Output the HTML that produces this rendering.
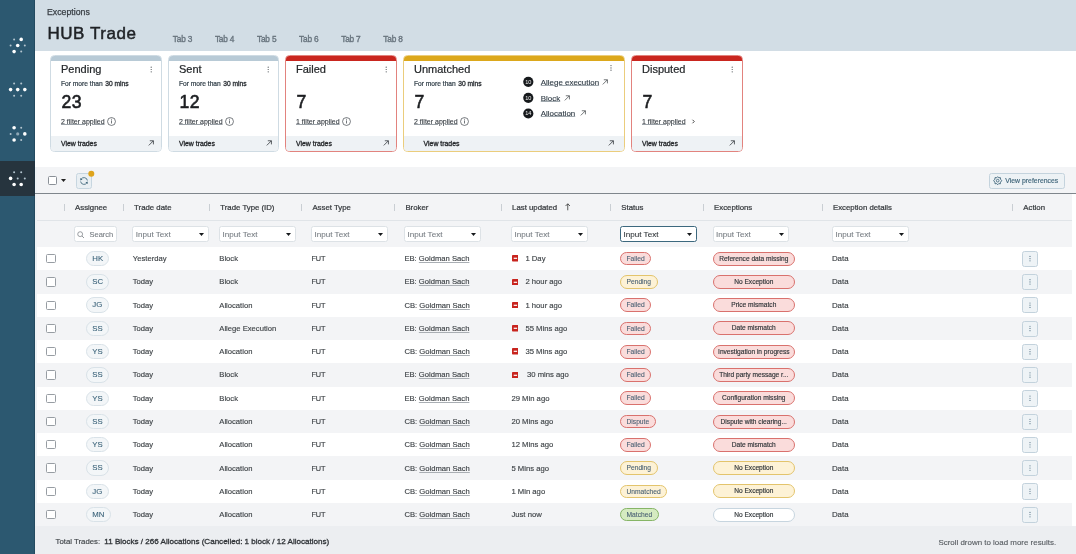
<!DOCTYPE html><html><head><meta charset="utf-8"><style>
*{box-sizing:border-box;margin:0;padding:0}
html,body{width:1076px;height:554px;overflow:hidden;background:#fff;font-family:"Liberation Sans",sans-serif}
#root{position:absolute;left:0;top:0;width:1076px;height:554px;will-change:transform}
.t{position:absolute;white-space:nowrap;line-height:1}
.r{position:absolute}
</style></head><body><div id="root"><div class="r" style="left:0.00px;top:0.00px;width:35.00px;height:554.00px;background:#2c5870;"></div>
<div class="r" style="left:0.00px;top:161.00px;width:35.00px;height:35.00px;background:#26343e;"></div>
<div class="r" style="left:34.00px;top:0.00px;width:1.00px;height:554.00px;background:rgba(20,50,66,0.35);"></div>
<svg class="r" style="left:12px;top:37px" width="5" height="5"><circle cx="2.10" cy="2.40" r="1.00" fill="#b4c5cf"/></svg>
<svg class="r" style="left:18px;top:36px" width="6" height="6"><circle cx="3.20" cy="3.40" r="1.80" fill="#fff"/></svg>
<svg class="r" style="left:8px;top:43px" width="5" height="5"><circle cx="2.60" cy="2.50" r="1.00" fill="#b4c5cf"/></svg>
<svg class="r" style="left:14px;top:42px" width="6" height="6"><circle cx="3.70" cy="3.50" r="1.80" fill="#fff"/></svg>
<svg class="r" style="left:22px;top:43px" width="5" height="5"><circle cx="2.80" cy="2.50" r="1.00" fill="#b4c5cf"/></svg>
<svg class="r" style="left:11px;top:48px" width="6" height="6"><circle cx="3.10" cy="3.60" r="1.80" fill="#fff"/></svg>
<svg class="r" style="left:19px;top:49px" width="5" height="5"><circle cx="2.20" cy="2.60" r="1.00" fill="#b4c5cf"/></svg>
<svg class="r" style="left:12px;top:81px" width="5" height="5"><circle cx="2.10" cy="2.50" r="1.00" fill="#b4c5cf"/></svg>
<svg class="r" style="left:19px;top:81px" width="5" height="5"><circle cx="2.20" cy="2.50" r="1.00" fill="#b4c5cf"/></svg>
<svg class="r" style="left:7px;top:86px" width="6" height="6"><circle cx="3.60" cy="3.60" r="1.80" fill="#fff"/></svg>
<svg class="r" style="left:14px;top:86px" width="6" height="6"><circle cx="3.70" cy="3.60" r="1.80" fill="#fff"/></svg>
<svg class="r" style="left:22px;top:86px" width="6" height="6"><circle cx="2.80" cy="3.60" r="1.80" fill="#fff"/></svg>
<svg class="r" style="left:12px;top:93px" width="5" height="5"><circle cx="2.10" cy="2.70" r="1.00" fill="#b4c5cf"/></svg>
<svg class="r" style="left:19px;top:93px" width="5" height="5"><circle cx="2.20" cy="2.70" r="1.00" fill="#b4c5cf"/></svg>
<svg class="r" style="left:11px;top:125px" width="6" height="6"><circle cx="3.10" cy="2.80" r="1.80" fill="#fff"/></svg>
<svg class="r" style="left:19px;top:125px" width="5" height="5"><circle cx="2.20" cy="2.80" r="1.00" fill="#b4c5cf"/></svg>
<svg class="r" style="left:8px;top:131px" width="5" height="5"><circle cx="2.60" cy="2.90" r="1.00" fill="#b4c5cf"/></svg>
<svg class="r" style="left:15px;top:131px" width="6" height="6"><circle cx="2.70" cy="2.90" r="1.60" fill="#8fa8b6"/></svg>
<svg class="r" style="left:22px;top:131px" width="6" height="6"><circle cx="2.80" cy="2.90" r="1.80" fill="#fff"/></svg>
<svg class="r" style="left:11px;top:137px" width="6" height="6"><circle cx="3.10" cy="3.00" r="1.80" fill="#fff"/></svg>
<svg class="r" style="left:19px;top:138px" width="5" height="5"><circle cx="2.20" cy="2.00" r="1.00" fill="#b4c5cf"/></svg>
<svg class="r" style="left:12px;top:170px" width="5" height="5"><circle cx="2.10" cy="2.30" r="1.00" fill="#b4c5cf"/></svg>
<svg class="r" style="left:19px;top:170px" width="5" height="5"><circle cx="2.20" cy="2.30" r="1.00" fill="#b4c5cf"/></svg>
<svg class="r" style="left:7px;top:175px" width="6" height="6"><circle cx="3.60" cy="3.40" r="1.80" fill="#fff"/></svg>
<svg class="r" style="left:15px;top:176px" width="5" height="5"><circle cx="2.70" cy="2.40" r="1.00" fill="#b4c5cf"/></svg>
<svg class="r" style="left:22px;top:176px" width="5" height="5"><circle cx="2.80" cy="2.40" r="1.00" fill="#b4c5cf"/></svg>
<svg class="r" style="left:11px;top:181px" width="6" height="6"><circle cx="3.10" cy="3.50" r="1.80" fill="#fff"/></svg>
<svg class="r" style="left:18px;top:181px" width="6" height="6"><circle cx="3.20" cy="3.50" r="1.80" fill="#fff"/></svg>
<div class="r" style="left:35.00px;top:0.00px;width:1041.00px;height:51.00px;background:#d2dde5;"></div>
<div class="t" style="left:47.00px;top:8.00px;font-size:8.75px;font-weight:400;color:#383e44;-webkit-text-stroke:0.25px #383e44">Exceptions</div>
<div class="t" style="left:47.40px;top:25.00px;font-size:17.0px;font-weight:400;color:#1f2226;-webkit-text-stroke:0.5px #1f2226;letter-spacing:0.55px">HUB Trade</div>
<div class="t" style="left:172.80px;top:35.00px;font-size:8.3px;font-weight:400;color:#68747e;-webkit-text-stroke:0.35px #68747e;letter-spacing:-0.2px">Tab 3</div>
<div class="t" style="left:214.90px;top:35.00px;font-size:8.3px;font-weight:400;color:#68747e;-webkit-text-stroke:0.35px #68747e;letter-spacing:-0.2px">Tab 4</div>
<div class="t" style="left:257.00px;top:35.00px;font-size:8.3px;font-weight:400;color:#68747e;-webkit-text-stroke:0.35px #68747e;letter-spacing:-0.2px">Tab 5</div>
<div class="t" style="left:299.10px;top:35.00px;font-size:8.3px;font-weight:400;color:#68747e;-webkit-text-stroke:0.35px #68747e;letter-spacing:-0.2px">Tab 6</div>
<div class="t" style="left:341.20px;top:35.00px;font-size:8.3px;font-weight:400;color:#68747e;-webkit-text-stroke:0.35px #68747e;letter-spacing:-0.2px">Tab 7</div>
<div class="t" style="left:383.30px;top:35.00px;font-size:8.3px;font-weight:400;color:#68747e;-webkit-text-stroke:0.35px #68747e;letter-spacing:-0.2px">Tab 8</div>
<div class="r" style="left:35.00px;top:51.00px;width:1041.00px;height:116.00px;background:#ffffff;"></div>
<div class="r" style="left:35.00px;top:166.80px;width:1041.00px;height:26.40px;background:#f3f4f6;"></div>
<div class="r" style="left:35.00px;top:167.00px;width:2.00px;height:360.00px;background:#eef2f5;"></div>
<div class="r" style="left:35.00px;top:193.00px;width:1041.00px;height:1.10px;background:#7f868c;"></div>
<div class="r" style="left:47.8px;top:176.2px;width:9.2px;height:9.2px;border:1px solid #8a9097;border-radius:1.5px;background:#fff"></div>
<svg class="r" style="left:60.5px;top:179.2px" width="5" height="3" viewBox="0 0 10 6"><path d="M0 0 H10 L5 6 Z" fill="#222"/></svg>
<div class="r" style="left:76.2px;top:172.8px;width:15.8px;height:15.8px;border:1px solid #c7d6e0;border-radius:2.5px;background:#e9eff3"></div>
<svg class="r" style="left:79.4px;top:175.8px" width="10" height="10" viewBox="-5 -5 10 10"><path d="M-2.88 -1.80 A3.4 3.4 0 0 1 3.37 -0.47" fill="none" stroke="#3c6478" stroke-width="0.85"/><path d="M2.88 1.80 A3.4 3.4 0 0 1 -3.37 0.47" fill="none" stroke="#3c6478" stroke-width="0.85"/><path d="M-3.73 -0.44 L-3.67 -3.00 L-1.46 -1.62 Z" fill="#3c6478"/><path d="M3.73 0.44 L3.67 3.00 L1.46 1.62 Z" fill="#3c6478"/></svg>
<svg class="r" style="left:87px;top:169px" width="9" height="9"><circle cx="4.30" cy="4.80" r="3.00" fill="#dfa41c"/></svg>
<div class="r" style="left:989.2px;top:173px;width:75.6px;height:15.5px;border:1px solid #c4d3dd;border-radius:2.5px;background:#edf2f5"></div>
<svg class="r" style="left:993.2px;top:176.2px" width="9.4" height="9.4" viewBox="-10 -10 20 20"><path d="M0 -8.6 L2.2 -6.2 L5.7 -6.6 L6 -3.2 L8.6 0 L6 3.2 L5.7 6.6 L2.2 6.2 L0 8.6 L-2.2 6.2 L-5.7 6.6 L-6 3.2 L-8.6 0 L-6 -3.2 L-5.7 -6.6 L-2.2 -6.2 Z" fill="none" stroke="#3e6479" stroke-width="1.9" stroke-linejoin="round"/><circle r="2.9" fill="none" stroke="#3e6479" stroke-width="1.8"/></svg>
<div class="t" style="left:1005.30px;top:178.00px;font-size:6.88px;font-weight:400;color:#3e6479;-webkit-text-stroke:0.15px #3e6479">View preferences</div>
<div class="r" style="left:37.00px;top:194.10px;width:1035.00px;height:26.00px;background:#f3f4f6;"></div>
<div class="r" style="left:37.00px;top:220.00px;width:1035.00px;height:0.90px;background:#e0e4e8;"></div>
<div class="r" style="left:37.00px;top:221.00px;width:1035.00px;height:26.00px;background:#f3f4f6;"></div>
<div class="r" style="left:1072.00px;top:194.00px;width:4.00px;height:332.00px;background:#ffffff;"></div>
<div class="r" style="left:63.90px;top:203.80px;width:1.00px;height:7.00px;background:#c9ced3;"></div>
<div class="t" style="left:75.10px;top:204.00px;font-size:7.8px;font-weight:400;color:#35393d;-webkit-text-stroke:0.22px #35393d">Assignee</div>
<div class="r" style="left:122.90px;top:203.80px;width:1.00px;height:7.00px;background:#c9ced3;"></div>
<div class="t" style="left:134.10px;top:204.00px;font-size:7.8px;font-weight:400;color:#35393d;-webkit-text-stroke:0.22px #35393d">Trade date</div>
<div class="r" style="left:209.10px;top:203.80px;width:1.00px;height:7.00px;background:#c9ced3;"></div>
<div class="t" style="left:220.30px;top:204.00px;font-size:7.8px;font-weight:400;color:#35393d;-webkit-text-stroke:0.22px #35393d">Trade Type (ID)</div>
<div class="r" style="left:301.20px;top:203.80px;width:1.00px;height:7.00px;background:#c9ced3;"></div>
<div class="t" style="left:312.40px;top:204.00px;font-size:7.8px;font-weight:400;color:#35393d;-webkit-text-stroke:0.22px #35393d">Asset Type</div>
<div class="r" style="left:394.20px;top:203.80px;width:1.00px;height:7.00px;background:#c9ced3;"></div>
<div class="t" style="left:405.40px;top:204.00px;font-size:7.8px;font-weight:400;color:#35393d;-webkit-text-stroke:0.22px #35393d">Broker</div>
<div class="r" style="left:500.90px;top:203.80px;width:1.00px;height:7.00px;background:#c9ced3;"></div>
<div class="t" style="left:512.10px;top:204.00px;font-size:7.8px;font-weight:400;color:#35393d;-webkit-text-stroke:0.22px #35393d">Last updated</div>
<div class="r" style="left:610.10px;top:203.80px;width:1.00px;height:7.00px;background:#c9ced3;"></div>
<div class="t" style="left:621.30px;top:204.00px;font-size:7.8px;font-weight:400;color:#35393d;-webkit-text-stroke:0.22px #35393d">Status</div>
<div class="r" style="left:702.90px;top:203.80px;width:1.00px;height:7.00px;background:#c9ced3;"></div>
<div class="t" style="left:714.10px;top:204.00px;font-size:7.8px;font-weight:400;color:#35393d;-webkit-text-stroke:0.22px #35393d">Exceptions</div>
<div class="r" style="left:821.80px;top:203.80px;width:1.00px;height:7.00px;background:#c9ced3;"></div>
<div class="t" style="left:833.00px;top:204.00px;font-size:7.8px;font-weight:400;color:#35393d;-webkit-text-stroke:0.22px #35393d">Exception details</div>
<div class="r" style="left:1012.10px;top:203.80px;width:1.00px;height:7.00px;background:#c9ced3;"></div>
<div class="t" style="left:1023.30px;top:204.00px;font-size:7.8px;font-weight:400;color:#35393d;-webkit-text-stroke:0.22px #35393d">Action</div>
<svg class="r" style="left:564.6px;top:203.2px" width="5.5" height="7.6" viewBox="0 0 11 15"><path d="M5.5 14.5 V1.5 M1 6 L5.5 1.5 L10 6" fill="none" stroke="#333" stroke-width="1.6"/></svg>
<div class="r" style="left:74px;top:226.3px;width:43px;height:15.6px;border:1px solid #dde2e6;border-radius:2.5px;background:#fff"></div>
<svg class="r" style="left:77.2px;top:230.5px" width="7.8" height="7.8" viewBox="0 0 16 16"><circle cx="6.5" cy="6.5" r="5" fill="none" stroke="#6d7379" stroke-width="1.4"/><path d="M10.2 10.2 L14.5 14.5" stroke="#6d7379" stroke-width="1.5"/></svg>
<div class="t" style="left:89.50px;top:231.00px;font-size:7.5px;font-weight:400;color:#777d83;-webkit-text-stroke:0.1px #777d83">Search</div>
<div class="r" style="left:132.40px;top:226.3px;width:76.6px;height:15.6px;border:1px solid #dde2e6;border-radius:2.5px;background:#fff"></div>
<div class="t" style="left:135.70px;top:231.00px;font-size:8.1px;font-weight:400;color:#777d83;-webkit-text-stroke:0.1px #777d83">Input Text</div>
<svg class="r" style="left:198.80px;top:232.5px" width="5" height="3" viewBox="0 0 10 6"><path d="M0 0 H10 L5 6 Z" fill="#16191c"/></svg>
<div class="r" style="left:219.30px;top:226.3px;width:76.6px;height:15.6px;border:1px solid #dde2e6;border-radius:2.5px;background:#fff"></div>
<div class="t" style="left:222.60px;top:231.00px;font-size:8.1px;font-weight:400;color:#777d83;-webkit-text-stroke:0.1px #777d83">Input Text</div>
<svg class="r" style="left:285.70px;top:232.5px" width="5" height="3" viewBox="0 0 10 6"><path d="M0 0 H10 L5 6 Z" fill="#16191c"/></svg>
<div class="r" style="left:311.20px;top:226.3px;width:76.6px;height:15.6px;border:1px solid #dde2e6;border-radius:2.5px;background:#fff"></div>
<div class="t" style="left:314.50px;top:231.00px;font-size:8.1px;font-weight:400;color:#777d83;-webkit-text-stroke:0.1px #777d83">Input Text</div>
<svg class="r" style="left:377.60px;top:232.5px" width="5" height="3" viewBox="0 0 10 6"><path d="M0 0 H10 L5 6 Z" fill="#16191c"/></svg>
<div class="r" style="left:404.20px;top:226.3px;width:76.6px;height:15.6px;border:1px solid #dde2e6;border-radius:2.5px;background:#fff"></div>
<div class="t" style="left:407.50px;top:231.00px;font-size:8.1px;font-weight:400;color:#777d83;-webkit-text-stroke:0.1px #777d83">Input Text</div>
<svg class="r" style="left:470.60px;top:232.5px" width="5" height="3" viewBox="0 0 10 6"><path d="M0 0 H10 L5 6 Z" fill="#16191c"/></svg>
<div class="r" style="left:511.30px;top:226.3px;width:76.6px;height:15.6px;border:1px solid #dde2e6;border-radius:2.5px;background:#fff"></div>
<div class="t" style="left:514.60px;top:231.00px;font-size:8.1px;font-weight:400;color:#777d83;-webkit-text-stroke:0.1px #777d83">Input Text</div>
<svg class="r" style="left:577.70px;top:232.5px" width="5" height="3" viewBox="0 0 10 6"><path d="M0 0 H10 L5 6 Z" fill="#16191c"/></svg>
<div class="r" style="left:620.20px;top:226.3px;width:76.6px;height:15.6px;border:1.5px solid #3c687e;border-radius:2.5px;background:#fff"></div>
<div class="t" style="left:623.50px;top:231.00px;font-size:8.1px;font-weight:400;color:#2f3438;-webkit-text-stroke:0.1px #2f3438">Input Text</div>
<svg class="r" style="left:686.60px;top:232.5px" width="5" height="3" viewBox="0 0 10 6"><path d="M0 0 H10 L5 6 Z" fill="#16191c"/></svg>
<div class="r" style="left:712.60px;top:226.3px;width:76.6px;height:15.6px;border:1px solid #dde2e6;border-radius:2.5px;background:#fff"></div>
<div class="t" style="left:715.90px;top:231.00px;font-size:8.1px;font-weight:400;color:#777d83;-webkit-text-stroke:0.1px #777d83">Input Text</div>
<svg class="r" style="left:779.00px;top:232.5px" width="5" height="3" viewBox="0 0 10 6"><path d="M0 0 H10 L5 6 Z" fill="#16191c"/></svg>
<div class="r" style="left:832.20px;top:226.3px;width:76.6px;height:15.6px;border:1px solid #dde2e6;border-radius:2.5px;background:#fff"></div>
<div class="t" style="left:835.50px;top:231.00px;font-size:8.1px;font-weight:400;color:#777d83;-webkit-text-stroke:0.1px #777d83">Input Text</div>
<svg class="r" style="left:898.60px;top:232.5px" width="5" height="3" viewBox="0 0 10 6"><path d="M0 0 H10 L5 6 Z" fill="#16191c"/></svg>
<div class="r" style="left:46.4px;top:254.03px;width:9.3px;height:9.3px;border:1px solid #979da3;border-radius:1.5px;background:#fff"></div>
<div class="r" style="left:86px;top:250.94px;height:15.4px;padding:0 5.3px;border:1px solid #d9e2e8;border-radius:8px;background:#f3f6f8;font-size:7.8px;line-height:13.4px;color:#3a6279;-webkit-text-stroke:0.1px #3a6279;white-space:nowrap">HK</div>
<div class="t" style="left:132.80px;top:255.00px;font-size:7.65px;font-weight:400;color:#3d4246;-webkit-text-stroke:0.14px #3d4246">Yesterday</div>
<div class="t" style="left:219.30px;top:255.00px;font-size:7.65px;font-weight:400;color:#3d4246;-webkit-text-stroke:0.14px #3d4246">Block</div>
<div class="t" style="left:311.40px;top:255.00px;font-size:7.3px;font-weight:400;color:#3d4246;-webkit-text-stroke:0.14px #3d4246">FUT</div>
<div class="t" style="left:404.40px;top:255.00px;font-size:7.65px;font-weight:400;color:#3d4246;-webkit-text-stroke:0.14px #3d4246">EB: <span style="text-decoration:underline;text-underline-offset:0.5px;text-decoration-color:#a9aeb3">Goldman Sach</span></div>
<svg class="r" style="left:511.7px;top:255.33px" width="6.8" height="6.6" viewBox="0 0 68 66"><rect width="68" height="66" rx="8" fill="#c8241e"/><rect x="17" y="27" width="34" height="12" fill="#fff"/></svg>
<div class="t" style="left:525.40px;top:255.00px;font-size:7.7px;font-weight:400;color:#3d4246;-webkit-text-stroke:0.14px #3d4246">1 Day</div>
<div class="r" style="left:619.9px;top:251.83px;height:13.6px;padding:0 5.6px;border:1px solid #d9716d;border-radius:7px;background:#fadcdb;font-size:6.7px;line-height:11.6px;color:#4a6275;-webkit-text-stroke:0.1px #4a6275;white-space:nowrap">Failed</div>
<div class="r" style="left:712.6px;top:251.63px;width:82.4px;height:14px;border:1px solid #d9716d;border-radius:7px;background:#fadcdb;font-size:6.6px;line-height:12px;color:#2f3438;-webkit-text-stroke:0.15px #2f3438;white-space:nowrap;text-align:center">Reference data missing</div>
<div class="t" style="left:831.90px;top:255.00px;font-size:7.9px;font-weight:400;color:#3d4246;-webkit-text-stroke:0.14px #3d4246">Data</div>
<div class="r" style="left:1022.2px;top:250.73px;width:15.6px;height:16.2px;border:1px solid #c3d2dc;border-radius:2.5px;background:#eef3f6"></div>
<svg class="r" style="left:1028px;top:254px" width="4" height="4"><circle cx="2.00" cy="2.44" r="0.60" fill="#5a788a"/></svg>
<svg class="r" style="left:1028px;top:257px" width="4" height="4"><circle cx="2.00" cy="1.63" r="0.60" fill="#5a788a"/></svg>
<svg class="r" style="left:1028px;top:259px" width="4" height="4"><circle cx="2.00" cy="1.83" r="0.60" fill="#5a788a"/></svg>
<div class="r" style="left:37.00px;top:270.27px;width:1035.00px;height:23.27px;background:#f3f4f6;"></div>
<div class="r" style="left:46.4px;top:277.30px;width:9.3px;height:9.3px;border:1px solid #979da3;border-radius:1.5px;background:#fff"></div>
<div class="r" style="left:86px;top:274.20px;height:15.4px;padding:0 5.3px;border:1px solid #d9e2e8;border-radius:8px;background:#f3f6f8;font-size:7.8px;line-height:13.4px;color:#3a6279;-webkit-text-stroke:0.1px #3a6279;white-space:nowrap">SC</div>
<div class="t" style="left:132.80px;top:278.00px;font-size:7.65px;font-weight:400;color:#3d4246;-webkit-text-stroke:0.14px #3d4246">Today</div>
<div class="t" style="left:219.30px;top:278.00px;font-size:7.65px;font-weight:400;color:#3d4246;-webkit-text-stroke:0.14px #3d4246">Block</div>
<div class="t" style="left:311.40px;top:278.00px;font-size:7.3px;font-weight:400;color:#3d4246;-webkit-text-stroke:0.14px #3d4246">FUT</div>
<div class="t" style="left:404.40px;top:278.00px;font-size:7.65px;font-weight:400;color:#3d4246;-webkit-text-stroke:0.14px #3d4246">EB: <span style="text-decoration:underline;text-underline-offset:0.5px;text-decoration-color:#a9aeb3">Goldman Sach</span></div>
<svg class="r" style="left:511.7px;top:278.60px" width="6.8" height="6.6" viewBox="0 0 68 66"><rect width="68" height="66" rx="8" fill="#c8241e"/><rect x="17" y="27" width="34" height="12" fill="#fff"/></svg>
<div class="t" style="left:525.40px;top:278.00px;font-size:7.7px;font-weight:400;color:#3d4246;-webkit-text-stroke:0.14px #3d4246">2 hour ago</div>
<div class="r" style="left:619.9px;top:275.10px;height:13.6px;padding:0 5.6px;border:1px solid #e3c46c;border-radius:7px;background:#fdf2d6;font-size:6.7px;line-height:11.6px;color:#4a6275;-webkit-text-stroke:0.1px #4a6275;white-space:nowrap">Pending</div>
<div class="r" style="left:712.6px;top:274.90px;width:82.4px;height:14px;border:1px solid #d9716d;border-radius:7px;background:#fadcdb;font-size:6.6px;line-height:12px;color:#2f3438;-webkit-text-stroke:0.15px #2f3438;white-space:nowrap;text-align:center">No Exception</div>
<div class="t" style="left:831.90px;top:278.00px;font-size:7.9px;font-weight:400;color:#3d4246;-webkit-text-stroke:0.14px #3d4246">Data</div>
<div class="r" style="left:1022.2px;top:274.00px;width:15.6px;height:16.2px;border:1px solid #c3d2dc;border-radius:2.5px;background:#eef3f6"></div>
<svg class="r" style="left:1028px;top:278px" width="4" height="4"><circle cx="2.00" cy="1.70" r="0.60" fill="#5a788a"/></svg>
<svg class="r" style="left:1028px;top:280px" width="4" height="4"><circle cx="2.00" cy="1.90" r="0.60" fill="#5a788a"/></svg>
<svg class="r" style="left:1028px;top:282px" width="4" height="4"><circle cx="2.00" cy="2.10" r="0.60" fill="#5a788a"/></svg>
<div class="r" style="left:46.4px;top:300.57px;width:9.3px;height:9.3px;border:1px solid #979da3;border-radius:1.5px;background:#fff"></div>
<div class="r" style="left:86px;top:297.48px;height:15.4px;padding:0 5.3px;border:1px solid #d9e2e8;border-radius:8px;background:#f3f6f8;font-size:7.8px;line-height:13.4px;color:#3a6279;-webkit-text-stroke:0.1px #3a6279;white-space:nowrap">JG</div>
<div class="t" style="left:132.80px;top:302.00px;font-size:7.65px;font-weight:400;color:#3d4246;-webkit-text-stroke:0.14px #3d4246">Today</div>
<div class="t" style="left:219.30px;top:302.00px;font-size:7.65px;font-weight:400;color:#3d4246;-webkit-text-stroke:0.14px #3d4246">Allocation</div>
<div class="t" style="left:311.40px;top:302.00px;font-size:7.3px;font-weight:400;color:#3d4246;-webkit-text-stroke:0.14px #3d4246">FUT</div>
<div class="t" style="left:404.40px;top:302.00px;font-size:7.65px;font-weight:400;color:#3d4246;-webkit-text-stroke:0.14px #3d4246">CB: <span style="text-decoration:underline;text-underline-offset:0.5px;text-decoration-color:#a9aeb3">Goldman Sach</span></div>
<svg class="r" style="left:511.7px;top:301.88px" width="6.8" height="6.6" viewBox="0 0 68 66"><rect width="68" height="66" rx="8" fill="#c8241e"/><rect x="17" y="27" width="34" height="12" fill="#fff"/></svg>
<div class="t" style="left:525.40px;top:302.00px;font-size:7.7px;font-weight:400;color:#3d4246;-webkit-text-stroke:0.14px #3d4246">1 hour ago</div>
<div class="r" style="left:619.9px;top:298.38px;height:13.6px;padding:0 5.6px;border:1px solid #d9716d;border-radius:7px;background:#fadcdb;font-size:6.7px;line-height:11.6px;color:#4a6275;-webkit-text-stroke:0.1px #4a6275;white-space:nowrap">Failed</div>
<div class="r" style="left:712.6px;top:298.18px;width:82.4px;height:14px;border:1px solid #d9716d;border-radius:7px;background:#fadcdb;font-size:6.6px;line-height:12px;color:#2f3438;-webkit-text-stroke:0.15px #2f3438;white-space:nowrap;text-align:center">Price mismatch</div>
<div class="t" style="left:831.90px;top:302.00px;font-size:7.9px;font-weight:400;color:#3d4246;-webkit-text-stroke:0.14px #3d4246">Data</div>
<div class="r" style="left:1022.2px;top:297.28px;width:15.6px;height:16.2px;border:1px solid #c3d2dc;border-radius:2.5px;background:#eef3f6"></div>
<svg class="r" style="left:1028px;top:301px" width="4" height="4"><circle cx="2.00" cy="1.98" r="0.60" fill="#5a788a"/></svg>
<svg class="r" style="left:1028px;top:303px" width="4" height="4"><circle cx="2.00" cy="2.18" r="0.60" fill="#5a788a"/></svg>
<svg class="r" style="left:1028px;top:305px" width="4" height="4"><circle cx="2.00" cy="2.38" r="0.60" fill="#5a788a"/></svg>
<div class="r" style="left:37.00px;top:316.81px;width:1035.00px;height:23.27px;background:#f3f4f6;"></div>
<div class="r" style="left:46.4px;top:323.84px;width:9.3px;height:9.3px;border:1px solid #979da3;border-radius:1.5px;background:#fff"></div>
<div class="r" style="left:86px;top:320.75px;height:15.4px;padding:0 5.3px;border:1px solid #d9e2e8;border-radius:8px;background:#f3f6f8;font-size:7.8px;line-height:13.4px;color:#3a6279;-webkit-text-stroke:0.1px #3a6279;white-space:nowrap">SS</div>
<div class="t" style="left:132.80px;top:325.00px;font-size:7.65px;font-weight:400;color:#3d4246;-webkit-text-stroke:0.14px #3d4246">Today</div>
<div class="t" style="left:219.30px;top:325.00px;font-size:7.65px;font-weight:400;color:#3d4246;-webkit-text-stroke:0.14px #3d4246">Allege Execution</div>
<div class="t" style="left:311.40px;top:325.00px;font-size:7.3px;font-weight:400;color:#3d4246;-webkit-text-stroke:0.14px #3d4246">FUT</div>
<div class="t" style="left:404.40px;top:325.00px;font-size:7.65px;font-weight:400;color:#3d4246;-webkit-text-stroke:0.14px #3d4246">EB: <span style="text-decoration:underline;text-underline-offset:0.5px;text-decoration-color:#a9aeb3">Goldman Sach</span></div>
<svg class="r" style="left:511.7px;top:325.14px" width="6.8" height="6.6" viewBox="0 0 68 66"><rect width="68" height="66" rx="8" fill="#c8241e"/><rect x="17" y="27" width="34" height="12" fill="#fff"/></svg>
<div class="t" style="left:525.40px;top:325.00px;font-size:7.7px;font-weight:400;color:#3d4246;-webkit-text-stroke:0.14px #3d4246">55 Mins ago</div>
<div class="r" style="left:619.9px;top:321.64px;height:13.6px;padding:0 5.6px;border:1px solid #d9716d;border-radius:7px;background:#fadcdb;font-size:6.7px;line-height:11.6px;color:#4a6275;-webkit-text-stroke:0.1px #4a6275;white-space:nowrap">Failed</div>
<div class="r" style="left:712.6px;top:321.44px;width:82.4px;height:14px;border:1px solid #d9716d;border-radius:7px;background:#fadcdb;font-size:6.6px;line-height:12px;color:#2f3438;-webkit-text-stroke:0.15px #2f3438;white-space:nowrap;text-align:center">Date mismatch</div>
<div class="t" style="left:831.90px;top:325.00px;font-size:7.9px;font-weight:400;color:#3d4246;-webkit-text-stroke:0.14px #3d4246">Data</div>
<div class="r" style="left:1022.2px;top:320.55px;width:15.6px;height:16.2px;border:1px solid #c3d2dc;border-radius:2.5px;background:#eef3f6"></div>
<svg class="r" style="left:1028px;top:324px" width="4" height="4"><circle cx="2.00" cy="2.25" r="0.60" fill="#5a788a"/></svg>
<svg class="r" style="left:1028px;top:326px" width="4" height="4"><circle cx="2.00" cy="2.44" r="0.60" fill="#5a788a"/></svg>
<svg class="r" style="left:1028px;top:329px" width="4" height="4"><circle cx="2.00" cy="1.64" r="0.60" fill="#5a788a"/></svg>
<div class="r" style="left:46.4px;top:347.11px;width:9.3px;height:9.3px;border:1px solid #979da3;border-radius:1.5px;background:#fff"></div>
<div class="r" style="left:86px;top:344.01px;height:15.4px;padding:0 5.3px;border:1px solid #d9e2e8;border-radius:8px;background:#f3f6f8;font-size:7.8px;line-height:13.4px;color:#3a6279;-webkit-text-stroke:0.1px #3a6279;white-space:nowrap">YS</div>
<div class="t" style="left:132.80px;top:348.00px;font-size:7.65px;font-weight:400;color:#3d4246;-webkit-text-stroke:0.14px #3d4246">Today</div>
<div class="t" style="left:219.30px;top:348.00px;font-size:7.65px;font-weight:400;color:#3d4246;-webkit-text-stroke:0.14px #3d4246">Allocation</div>
<div class="t" style="left:311.40px;top:348.00px;font-size:7.3px;font-weight:400;color:#3d4246;-webkit-text-stroke:0.14px #3d4246">FUT</div>
<div class="t" style="left:404.40px;top:348.00px;font-size:7.65px;font-weight:400;color:#3d4246;-webkit-text-stroke:0.14px #3d4246">CB: <span style="text-decoration:underline;text-underline-offset:0.5px;text-decoration-color:#a9aeb3">Goldman Sach</span></div>
<svg class="r" style="left:511.7px;top:348.41px" width="6.8" height="6.6" viewBox="0 0 68 66"><rect width="68" height="66" rx="8" fill="#c8241e"/><rect x="17" y="27" width="34" height="12" fill="#fff"/></svg>
<div class="t" style="left:525.40px;top:348.00px;font-size:7.7px;font-weight:400;color:#3d4246;-webkit-text-stroke:0.14px #3d4246">35 Mins ago</div>
<div class="r" style="left:619.9px;top:344.91px;height:13.6px;padding:0 5.6px;border:1px solid #d9716d;border-radius:7px;background:#fadcdb;font-size:6.7px;line-height:11.6px;color:#4a6275;-webkit-text-stroke:0.1px #4a6275;white-space:nowrap">Failed</div>
<div class="r" style="left:712.6px;top:344.71px;width:82.4px;height:14px;border:1px solid #d9716d;border-radius:7px;background:#fadcdb;font-size:6.6px;line-height:12px;color:#2f3438;-webkit-text-stroke:0.15px #2f3438;white-space:nowrap;text-align:center">Investigation in progress</div>
<div class="t" style="left:831.90px;top:348.00px;font-size:7.9px;font-weight:400;color:#3d4246;-webkit-text-stroke:0.14px #3d4246">Data</div>
<div class="r" style="left:1022.2px;top:343.81px;width:15.6px;height:16.2px;border:1px solid #c3d2dc;border-radius:2.5px;background:#eef3f6"></div>
<svg class="r" style="left:1028px;top:347px" width="4" height="4"><circle cx="2.00" cy="2.51" r="0.60" fill="#5a788a"/></svg>
<svg class="r" style="left:1028px;top:350px" width="4" height="4"><circle cx="2.00" cy="1.71" r="0.60" fill="#5a788a"/></svg>
<svg class="r" style="left:1028px;top:352px" width="4" height="4"><circle cx="2.00" cy="1.91" r="0.60" fill="#5a788a"/></svg>
<div class="r" style="left:37.00px;top:363.35px;width:1035.00px;height:23.27px;background:#f3f4f6;"></div>
<div class="r" style="left:46.4px;top:370.38px;width:9.3px;height:9.3px;border:1px solid #979da3;border-radius:1.5px;background:#fff"></div>
<div class="r" style="left:86px;top:367.29px;height:15.4px;padding:0 5.3px;border:1px solid #d9e2e8;border-radius:8px;background:#f3f6f8;font-size:7.8px;line-height:13.4px;color:#3a6279;-webkit-text-stroke:0.1px #3a6279;white-space:nowrap">SS</div>
<div class="t" style="left:132.80px;top:371.00px;font-size:7.65px;font-weight:400;color:#3d4246;-webkit-text-stroke:0.14px #3d4246">Today</div>
<div class="t" style="left:219.30px;top:371.00px;font-size:7.65px;font-weight:400;color:#3d4246;-webkit-text-stroke:0.14px #3d4246">Block</div>
<div class="t" style="left:311.40px;top:371.00px;font-size:7.3px;font-weight:400;color:#3d4246;-webkit-text-stroke:0.14px #3d4246">FUT</div>
<div class="t" style="left:404.40px;top:371.00px;font-size:7.65px;font-weight:400;color:#3d4246;-webkit-text-stroke:0.14px #3d4246">EB: <span style="text-decoration:underline;text-underline-offset:0.5px;text-decoration-color:#a9aeb3">Goldman Sach</span></div>
<svg class="r" style="left:511.7px;top:371.69px" width="6.8" height="6.6" viewBox="0 0 68 66"><rect width="68" height="66" rx="8" fill="#c8241e"/><rect x="17" y="27" width="34" height="12" fill="#fff"/></svg>
<div class="t" style="left:527.00px;top:371.00px;font-size:7.7px;font-weight:400;color:#3d4246;-webkit-text-stroke:0.14px #3d4246">30 mins ago</div>
<div class="r" style="left:619.9px;top:368.19px;height:13.6px;padding:0 5.6px;border:1px solid #d9716d;border-radius:7px;background:#fadcdb;font-size:6.7px;line-height:11.6px;color:#4a6275;-webkit-text-stroke:0.1px #4a6275;white-space:nowrap">Failed</div>
<div class="r" style="left:712.6px;top:367.99px;width:82.4px;height:14px;border:1px solid #d9716d;border-radius:7px;background:#fadcdb;font-size:6.6px;line-height:12px;color:#2f3438;-webkit-text-stroke:0.15px #2f3438;white-space:nowrap;text-align:center">Third party message r...</div>
<div class="t" style="left:831.90px;top:371.00px;font-size:7.9px;font-weight:400;color:#3d4246;-webkit-text-stroke:0.14px #3d4246">Data</div>
<div class="r" style="left:1022.2px;top:367.09px;width:15.6px;height:16.2px;border:1px solid #c3d2dc;border-radius:2.5px;background:#eef3f6"></div>
<svg class="r" style="left:1028px;top:371px" width="4" height="4"><circle cx="2.00" cy="1.79" r="0.60" fill="#5a788a"/></svg>
<svg class="r" style="left:1028px;top:373px" width="4" height="4"><circle cx="2.00" cy="1.99" r="0.60" fill="#5a788a"/></svg>
<svg class="r" style="left:1028px;top:375px" width="4" height="4"><circle cx="2.00" cy="2.19" r="0.60" fill="#5a788a"/></svg>
<div class="r" style="left:46.4px;top:393.65px;width:9.3px;height:9.3px;border:1px solid #979da3;border-radius:1.5px;background:#fff"></div>
<div class="r" style="left:86px;top:390.56px;height:15.4px;padding:0 5.3px;border:1px solid #d9e2e8;border-radius:8px;background:#f3f6f8;font-size:7.8px;line-height:13.4px;color:#3a6279;-webkit-text-stroke:0.1px #3a6279;white-space:nowrap">YS</div>
<div class="t" style="left:132.80px;top:395.00px;font-size:7.65px;font-weight:400;color:#3d4246;-webkit-text-stroke:0.14px #3d4246">Today</div>
<div class="t" style="left:219.30px;top:395.00px;font-size:7.65px;font-weight:400;color:#3d4246;-webkit-text-stroke:0.14px #3d4246">Block</div>
<div class="t" style="left:311.40px;top:395.00px;font-size:7.3px;font-weight:400;color:#3d4246;-webkit-text-stroke:0.14px #3d4246">FUT</div>
<div class="t" style="left:404.40px;top:395.00px;font-size:7.65px;font-weight:400;color:#3d4246;-webkit-text-stroke:0.14px #3d4246">EB: <span style="text-decoration:underline;text-underline-offset:0.5px;text-decoration-color:#a9aeb3">Goldman Sach</span></div>
<div class="t" style="left:511.40px;top:395.00px;font-size:7.7px;font-weight:400;color:#3d4246;-webkit-text-stroke:0.14px #3d4246">29 Min ago</div>
<div class="r" style="left:619.9px;top:391.45px;height:13.6px;padding:0 5.6px;border:1px solid #d9716d;border-radius:7px;background:#fadcdb;font-size:6.7px;line-height:11.6px;color:#4a6275;-webkit-text-stroke:0.1px #4a6275;white-space:nowrap">Failed</div>
<div class="r" style="left:712.6px;top:391.25px;width:82.4px;height:14px;border:1px solid #d9716d;border-radius:7px;background:#fadcdb;font-size:6.6px;line-height:12px;color:#2f3438;-webkit-text-stroke:0.15px #2f3438;white-space:nowrap;text-align:center">Configuration missing</div>
<div class="t" style="left:831.90px;top:395.00px;font-size:7.9px;font-weight:400;color:#3d4246;-webkit-text-stroke:0.14px #3d4246">Data</div>
<div class="r" style="left:1022.2px;top:390.36px;width:15.6px;height:16.2px;border:1px solid #c3d2dc;border-radius:2.5px;background:#eef3f6"></div>
<svg class="r" style="left:1028px;top:394px" width="4" height="4"><circle cx="2.00" cy="2.06" r="0.60" fill="#5a788a"/></svg>
<svg class="r" style="left:1028px;top:396px" width="4" height="4"><circle cx="2.00" cy="2.25" r="0.60" fill="#5a788a"/></svg>
<svg class="r" style="left:1028px;top:398px" width="4" height="4"><circle cx="2.00" cy="2.45" r="0.60" fill="#5a788a"/></svg>
<div class="r" style="left:37.00px;top:409.89px;width:1035.00px;height:23.27px;background:#f3f4f6;"></div>
<div class="r" style="left:46.4px;top:416.92px;width:9.3px;height:9.3px;border:1px solid #979da3;border-radius:1.5px;background:#fff"></div>
<div class="r" style="left:86px;top:413.82px;height:15.4px;padding:0 5.3px;border:1px solid #d9e2e8;border-radius:8px;background:#f3f6f8;font-size:7.8px;line-height:13.4px;color:#3a6279;-webkit-text-stroke:0.1px #3a6279;white-space:nowrap">SS</div>
<div class="t" style="left:132.80px;top:418.00px;font-size:7.65px;font-weight:400;color:#3d4246;-webkit-text-stroke:0.14px #3d4246">Today</div>
<div class="t" style="left:219.30px;top:418.00px;font-size:7.65px;font-weight:400;color:#3d4246;-webkit-text-stroke:0.14px #3d4246">Allocation</div>
<div class="t" style="left:311.40px;top:418.00px;font-size:7.3px;font-weight:400;color:#3d4246;-webkit-text-stroke:0.14px #3d4246">FUT</div>
<div class="t" style="left:404.40px;top:418.00px;font-size:7.65px;font-weight:400;color:#3d4246;-webkit-text-stroke:0.14px #3d4246">CB: <span style="text-decoration:underline;text-underline-offset:0.5px;text-decoration-color:#a9aeb3">Goldman Sach</span></div>
<div class="t" style="left:511.40px;top:418.00px;font-size:7.7px;font-weight:400;color:#3d4246;-webkit-text-stroke:0.14px #3d4246">20 Mins ago</div>
<div class="r" style="left:619.9px;top:414.72px;height:13.6px;padding:0 5.6px;border:1px solid #d9716d;border-radius:7px;background:#fadcdb;font-size:6.7px;line-height:11.6px;color:#4a6275;-webkit-text-stroke:0.1px #4a6275;white-space:nowrap">Dispute</div>
<div class="r" style="left:712.6px;top:414.52px;width:82.4px;height:14px;border:1px solid #d9716d;border-radius:7px;background:#fadcdb;font-size:6.6px;line-height:12px;color:#2f3438;-webkit-text-stroke:0.15px #2f3438;white-space:nowrap;text-align:center">Dispute with clearing...</div>
<div class="t" style="left:831.90px;top:418.00px;font-size:7.9px;font-weight:400;color:#3d4246;-webkit-text-stroke:0.14px #3d4246">Data</div>
<div class="r" style="left:1022.2px;top:413.62px;width:15.6px;height:16.2px;border:1px solid #c3d2dc;border-radius:2.5px;background:#eef3f6"></div>
<svg class="r" style="left:1028px;top:417px" width="4" height="4"><circle cx="2.00" cy="2.32" r="0.60" fill="#5a788a"/></svg>
<svg class="r" style="left:1028px;top:419px" width="4" height="4"><circle cx="2.00" cy="2.52" r="0.60" fill="#5a788a"/></svg>
<svg class="r" style="left:1028px;top:422px" width="4" height="4"><circle cx="2.00" cy="1.72" r="0.60" fill="#5a788a"/></svg>
<div class="r" style="left:46.4px;top:440.19px;width:9.3px;height:9.3px;border:1px solid #979da3;border-radius:1.5px;background:#fff"></div>
<div class="r" style="left:86px;top:437.09px;height:15.4px;padding:0 5.3px;border:1px solid #d9e2e8;border-radius:8px;background:#f3f6f8;font-size:7.8px;line-height:13.4px;color:#3a6279;-webkit-text-stroke:0.1px #3a6279;white-space:nowrap">YS</div>
<div class="t" style="left:132.80px;top:441.00px;font-size:7.65px;font-weight:400;color:#3d4246;-webkit-text-stroke:0.14px #3d4246">Today</div>
<div class="t" style="left:219.30px;top:441.00px;font-size:7.65px;font-weight:400;color:#3d4246;-webkit-text-stroke:0.14px #3d4246">Allocation</div>
<div class="t" style="left:311.40px;top:441.00px;font-size:7.3px;font-weight:400;color:#3d4246;-webkit-text-stroke:0.14px #3d4246">FUT</div>
<div class="t" style="left:404.40px;top:441.00px;font-size:7.65px;font-weight:400;color:#3d4246;-webkit-text-stroke:0.14px #3d4246">CB: <span style="text-decoration:underline;text-underline-offset:0.5px;text-decoration-color:#a9aeb3">Goldman Sach</span></div>
<div class="t" style="left:511.40px;top:441.00px;font-size:7.7px;font-weight:400;color:#3d4246;-webkit-text-stroke:0.14px #3d4246">12 Mins ago</div>
<div class="r" style="left:619.9px;top:437.99px;height:13.6px;padding:0 5.6px;border:1px solid #d9716d;border-radius:7px;background:#fadcdb;font-size:6.7px;line-height:11.6px;color:#4a6275;-webkit-text-stroke:0.1px #4a6275;white-space:nowrap">Failed</div>
<div class="r" style="left:712.6px;top:437.79px;width:82.4px;height:14px;border:1px solid #d9716d;border-radius:7px;background:#fadcdb;font-size:6.6px;line-height:12px;color:#2f3438;-webkit-text-stroke:0.15px #2f3438;white-space:nowrap;text-align:center">Date mismatch</div>
<div class="t" style="left:831.90px;top:441.00px;font-size:7.9px;font-weight:400;color:#3d4246;-webkit-text-stroke:0.14px #3d4246">Data</div>
<div class="r" style="left:1022.2px;top:436.89px;width:15.6px;height:16.2px;border:1px solid #c3d2dc;border-radius:2.5px;background:#eef3f6"></div>
<svg class="r" style="left:1028px;top:440px" width="4" height="4"><circle cx="2.00" cy="2.59" r="0.60" fill="#5a788a"/></svg>
<svg class="r" style="left:1028px;top:443px" width="4" height="4"><circle cx="2.00" cy="1.79" r="0.60" fill="#5a788a"/></svg>
<svg class="r" style="left:1028px;top:445px" width="4" height="4"><circle cx="2.00" cy="1.99" r="0.60" fill="#5a788a"/></svg>
<div class="r" style="left:37.00px;top:456.43px;width:1035.00px;height:23.27px;background:#f3f4f6;"></div>
<div class="r" style="left:46.4px;top:463.46px;width:9.3px;height:9.3px;border:1px solid #979da3;border-radius:1.5px;background:#fff"></div>
<div class="r" style="left:86px;top:460.37px;height:15.4px;padding:0 5.3px;border:1px solid #d9e2e8;border-radius:8px;background:#f3f6f8;font-size:7.8px;line-height:13.4px;color:#3a6279;-webkit-text-stroke:0.1px #3a6279;white-space:nowrap">SS</div>
<div class="t" style="left:132.80px;top:465.00px;font-size:7.65px;font-weight:400;color:#3d4246;-webkit-text-stroke:0.14px #3d4246">Today</div>
<div class="t" style="left:219.30px;top:465.00px;font-size:7.65px;font-weight:400;color:#3d4246;-webkit-text-stroke:0.14px #3d4246">Allocation</div>
<div class="t" style="left:311.40px;top:465.00px;font-size:7.3px;font-weight:400;color:#3d4246;-webkit-text-stroke:0.14px #3d4246">FUT</div>
<div class="t" style="left:404.40px;top:465.00px;font-size:7.65px;font-weight:400;color:#3d4246;-webkit-text-stroke:0.14px #3d4246">CB: <span style="text-decoration:underline;text-underline-offset:0.5px;text-decoration-color:#a9aeb3">Goldman Sach</span></div>
<div class="t" style="left:511.40px;top:465.00px;font-size:7.7px;font-weight:400;color:#3d4246;-webkit-text-stroke:0.14px #3d4246">5 Mins ago</div>
<div class="r" style="left:619.9px;top:461.26px;height:13.6px;padding:0 5.6px;border:1px solid #e3c46c;border-radius:7px;background:#fdf2d6;font-size:6.7px;line-height:11.6px;color:#4a6275;-webkit-text-stroke:0.1px #4a6275;white-space:nowrap">Pending</div>
<div class="r" style="left:712.6px;top:461.06px;width:82.4px;height:14px;border:1px solid #e3c46c;border-radius:7px;background:#fdf2d6;font-size:6.6px;line-height:12px;color:#2f3438;-webkit-text-stroke:0.15px #2f3438;white-space:nowrap;text-align:center">No Exception</div>
<div class="t" style="left:831.90px;top:465.00px;font-size:7.9px;font-weight:400;color:#3d4246;-webkit-text-stroke:0.14px #3d4246">Data</div>
<div class="r" style="left:1022.2px;top:460.17px;width:15.6px;height:16.2px;border:1px solid #c3d2dc;border-radius:2.5px;background:#eef3f6"></div>
<svg class="r" style="left:1028px;top:464px" width="4" height="4"><circle cx="2.00" cy="1.87" r="0.60" fill="#5a788a"/></svg>
<svg class="r" style="left:1028px;top:466px" width="4" height="4"><circle cx="2.00" cy="2.06" r="0.60" fill="#5a788a"/></svg>
<svg class="r" style="left:1028px;top:468px" width="4" height="4"><circle cx="2.00" cy="2.26" r="0.60" fill="#5a788a"/></svg>
<div class="r" style="left:46.4px;top:486.73px;width:9.3px;height:9.3px;border:1px solid #979da3;border-radius:1.5px;background:#fff"></div>
<div class="r" style="left:86px;top:483.63px;height:15.4px;padding:0 5.3px;border:1px solid #d9e2e8;border-radius:8px;background:#f3f6f8;font-size:7.8px;line-height:13.4px;color:#3a6279;-webkit-text-stroke:0.1px #3a6279;white-space:nowrap">JG</div>
<div class="t" style="left:132.80px;top:488.00px;font-size:7.65px;font-weight:400;color:#3d4246;-webkit-text-stroke:0.14px #3d4246">Today</div>
<div class="t" style="left:219.30px;top:488.00px;font-size:7.65px;font-weight:400;color:#3d4246;-webkit-text-stroke:0.14px #3d4246">Allocation</div>
<div class="t" style="left:311.40px;top:488.00px;font-size:7.3px;font-weight:400;color:#3d4246;-webkit-text-stroke:0.14px #3d4246">FUT</div>
<div class="t" style="left:404.40px;top:488.00px;font-size:7.65px;font-weight:400;color:#3d4246;-webkit-text-stroke:0.14px #3d4246">CB: <span style="text-decoration:underline;text-underline-offset:0.5px;text-decoration-color:#a9aeb3">Goldman Sach</span></div>
<div class="t" style="left:511.40px;top:488.00px;font-size:7.7px;font-weight:400;color:#3d4246;-webkit-text-stroke:0.14px #3d4246">1 Min ago</div>
<div class="r" style="left:619.9px;top:484.53px;height:13.6px;padding:0 5.6px;border:1px solid #e3c46c;border-radius:7px;background:#fdf2d6;font-size:6.7px;line-height:11.6px;color:#4a6275;-webkit-text-stroke:0.1px #4a6275;white-space:nowrap">Unmatched</div>
<div class="r" style="left:712.6px;top:484.33px;width:82.4px;height:14px;border:1px solid #e3c46c;border-radius:7px;background:#fdf2d6;font-size:6.6px;line-height:12px;color:#2f3438;-webkit-text-stroke:0.15px #2f3438;white-space:nowrap;text-align:center">No Exception</div>
<div class="t" style="left:831.90px;top:488.00px;font-size:7.9px;font-weight:400;color:#3d4246;-webkit-text-stroke:0.14px #3d4246">Data</div>
<div class="r" style="left:1022.2px;top:483.44px;width:15.6px;height:16.2px;border:1px solid #c3d2dc;border-radius:2.5px;background:#eef3f6"></div>
<svg class="r" style="left:1028px;top:487px" width="4" height="4"><circle cx="2.00" cy="2.13" r="0.60" fill="#5a788a"/></svg>
<svg class="r" style="left:1028px;top:489px" width="4" height="4"><circle cx="2.00" cy="2.33" r="0.60" fill="#5a788a"/></svg>
<svg class="r" style="left:1028px;top:491px" width="4" height="4"><circle cx="2.00" cy="2.53" r="0.60" fill="#5a788a"/></svg>
<div class="r" style="left:37.00px;top:502.97px;width:1035.00px;height:23.27px;background:#f3f4f6;"></div>
<div class="r" style="left:46.4px;top:510.00px;width:9.3px;height:9.3px;border:1px solid #979da3;border-radius:1.5px;background:#fff"></div>
<div class="r" style="left:86px;top:506.91px;height:15.4px;padding:0 5.3px;border:1px solid #d9e2e8;border-radius:8px;background:#f3f6f8;font-size:7.8px;line-height:13.4px;color:#3a6279;-webkit-text-stroke:0.1px #3a6279;white-space:nowrap">MN</div>
<div class="t" style="left:132.80px;top:511.00px;font-size:7.65px;font-weight:400;color:#3d4246;-webkit-text-stroke:0.14px #3d4246">Today</div>
<div class="t" style="left:219.30px;top:511.00px;font-size:7.65px;font-weight:400;color:#3d4246;-webkit-text-stroke:0.14px #3d4246">Allocation</div>
<div class="t" style="left:311.40px;top:511.00px;font-size:7.3px;font-weight:400;color:#3d4246;-webkit-text-stroke:0.14px #3d4246">FUT</div>
<div class="t" style="left:404.40px;top:511.00px;font-size:7.65px;font-weight:400;color:#3d4246;-webkit-text-stroke:0.14px #3d4246">CB: <span style="text-decoration:underline;text-underline-offset:0.5px;text-decoration-color:#a9aeb3">Goldman Sach</span></div>
<div class="t" style="left:511.40px;top:511.00px;font-size:7.7px;font-weight:400;color:#3d4246;-webkit-text-stroke:0.14px #3d4246">Just now</div>
<div class="r" style="left:619.9px;top:507.81px;height:13.6px;padding:0 5.6px;border:1px solid #86b566;border-radius:7px;background:#d5ebc1;font-size:6.7px;line-height:11.6px;color:#4a6275;-webkit-text-stroke:0.1px #4a6275;white-space:nowrap">Matched</div>
<div class="r" style="left:712.6px;top:507.61px;width:82.4px;height:14px;border:1px solid #c7d5df;border-radius:7px;background:#ffffff;font-size:6.6px;line-height:12px;color:#2f3438;-webkit-text-stroke:0.15px #2f3438;white-space:nowrap;text-align:center">No Exception</div>
<div class="t" style="left:831.90px;top:511.00px;font-size:7.9px;font-weight:400;color:#3d4246;-webkit-text-stroke:0.14px #3d4246">Data</div>
<div class="r" style="left:1022.2px;top:506.71px;width:15.6px;height:16.2px;border:1px solid #c3d2dc;border-radius:2.5px;background:#eef3f6"></div>
<svg class="r" style="left:1028px;top:510px" width="4" height="4"><circle cx="2.00" cy="2.40" r="0.60" fill="#5a788a"/></svg>
<svg class="r" style="left:1028px;top:513px" width="4" height="4"><circle cx="2.00" cy="1.61" r="0.60" fill="#5a788a"/></svg>
<svg class="r" style="left:1028px;top:515px" width="4" height="4"><circle cx="2.00" cy="1.80" r="0.60" fill="#5a788a"/></svg>
<div class="r" style="left:35.00px;top:525.60px;width:1041.00px;height:28.40px;background:#eceef1;"></div>
<div class="t" style="left:55.50px;top:538.00px;font-size:7.8px;font-weight:400;color:#3d4246;-webkit-text-stroke:0.14px #3d4246">Total Trades:</div>
<div class="t" style="left:104.30px;top:538.00px;font-size:8.05px;font-weight:400;color:#2e3236;-webkit-text-stroke:0.3px #2e3236">11 Blocks / 266 Allocations (Cancelled: 1 block / 12 Allocations)</div>
<div class="t" style="left:938.40px;top:539.00px;font-size:7.94px;font-weight:400;color:#575c61;-webkit-text-stroke:0.12px #575c61">Scroll drown to load more results.</div>
<div class="r" style="left:50px;top:55px;width:112px;height:97px;border:1px solid #cfdbe3;border-radius:4.5px;overflow:hidden;background:#fff"><div class="r" style="left:-1px;right:-1px;top:-1px;height:5.8px;background:#b8cad6"></div><div class="r" style="left:0;right:0;bottom:0;height:15.5px;background:#eef2f5"></div></div>
<div class="t" style="left:61.00px;top:64.00px;font-size:11.0px;font-weight:400;color:#25282b;-webkit-text-stroke:0.22px #25282b">Pending</div>
<svg class="r" style="left:149px;top:65px" width="4" height="4"><circle cx="2.20" cy="2.20" r="0.60" fill="#4a4f54"/></svg>
<svg class="r" style="left:149px;top:67px" width="4" height="4"><circle cx="2.20" cy="2.50" r="0.60" fill="#4a4f54"/></svg>
<svg class="r" style="left:149px;top:70px" width="4" height="4"><circle cx="2.20" cy="1.80" r="0.60" fill="#4a4f54"/></svg>
<div class="t" style="left:61.00px;top:81.00px;font-size:6.65px;font-weight:400;color:#33404a;-webkit-text-stroke:0.2px #33404a">For more than&nbsp;<span style="margin-left:0.8px;-webkit-text-stroke:0.3px #262b30;color:#262b30">30 mins</span></div>
<div class="t" style="left:61.40px;top:94.00px;font-size:17.6px;font-weight:400;color:#1c1e21;-webkit-text-stroke:0.6px #1c1e21;letter-spacing:0.5px">23</div>
<div class="t" style="left:61.00px;top:118.00px;font-size:7.0px;font-weight:400;color:#33393f;-webkit-text-stroke:0.1px #33393f"><span style="text-decoration:underline;text-underline-offset:0.4px;text-decoration-color:#9aa1a7">2 filter applied</span></div>
<svg class="r" style="left:106.80px;top:116.80px" width="9" height="9" viewBox="-5 -5 10 10"><circle cx="0" cy="0" r="4.4" fill="none" stroke="#3a4046" stroke-width="0.75"/><rect x="-0.4" y="-1.2" width="0.8" height="3.4" fill="#3a4046"/><rect x="-0.45" y="-3" width="0.9" height="0.9" fill="#3a4046"/></svg>
<div class="t" style="left:61.00px;top:141.00px;font-size:6.9px;font-weight:400;color:#25282b;-webkit-text-stroke:0.3px #25282b">View trades</div>
<svg class="r" style="left:148.00px;top:140.40px" width="6.2" height="6.2" viewBox="0 0 12 12"><path d="M1.5 10.5 L10.5 1.5 M3.5 1.5 H10.5 V8.5" fill="none" stroke="#2f3438" stroke-width="1.5"/></svg>
<div class="r" style="left:168px;top:55px;width:111px;height:97px;border:1px solid #cfdbe3;border-radius:4.5px;overflow:hidden;background:#fff"><div class="r" style="left:-1px;right:-1px;top:-1px;height:5.8px;background:#b8cad6"></div><div class="r" style="left:0;right:0;bottom:0;height:15.5px;background:#eef2f5"></div></div>
<div class="t" style="left:179.00px;top:64.00px;font-size:11.0px;font-weight:400;color:#25282b;-webkit-text-stroke:0.22px #25282b">Sent</div>
<svg class="r" style="left:266px;top:65px" width="4" height="4"><circle cx="2.20" cy="2.20" r="0.60" fill="#4a4f54"/></svg>
<svg class="r" style="left:266px;top:67px" width="4" height="4"><circle cx="2.20" cy="2.50" r="0.60" fill="#4a4f54"/></svg>
<svg class="r" style="left:266px;top:70px" width="4" height="4"><circle cx="2.20" cy="1.80" r="0.60" fill="#4a4f54"/></svg>
<div class="t" style="left:179.00px;top:81.00px;font-size:6.65px;font-weight:400;color:#33404a;-webkit-text-stroke:0.2px #33404a">For more than&nbsp;<span style="margin-left:0.8px;-webkit-text-stroke:0.3px #262b30;color:#262b30">30 mins</span></div>
<div class="t" style="left:179.40px;top:94.00px;font-size:17.6px;font-weight:400;color:#1c1e21;-webkit-text-stroke:0.6px #1c1e21;letter-spacing:0.5px">12</div>
<div class="t" style="left:179.00px;top:118.00px;font-size:7.0px;font-weight:400;color:#33393f;-webkit-text-stroke:0.1px #33393f"><span style="text-decoration:underline;text-underline-offset:0.4px;text-decoration-color:#9aa1a7">2 filter applied</span></div>
<svg class="r" style="left:224.80px;top:116.80px" width="9" height="9" viewBox="-5 -5 10 10"><circle cx="0" cy="0" r="4.4" fill="none" stroke="#3a4046" stroke-width="0.75"/><rect x="-0.4" y="-1.2" width="0.8" height="3.4" fill="#3a4046"/><rect x="-0.45" y="-3" width="0.9" height="0.9" fill="#3a4046"/></svg>
<div class="t" style="left:179.00px;top:141.00px;font-size:6.9px;font-weight:400;color:#25282b;-webkit-text-stroke:0.3px #25282b">View trades</div>
<svg class="r" style="left:266.00px;top:140.40px" width="6.2" height="6.2" viewBox="0 0 12 12"><path d="M1.5 10.5 L10.5 1.5 M3.5 1.5 H10.5 V8.5" fill="none" stroke="#2f3438" stroke-width="1.5"/></svg>
<div class="r" style="left:285px;top:55px;width:112px;height:97px;border:1px solid #e2837e;border-radius:4.5px;overflow:hidden;background:#fff"><div class="r" style="left:-1px;right:-1px;top:-1px;height:5.8px;background:#c9261f"></div><div class="r" style="left:0;right:0;bottom:0;height:15.5px;background:#eef2f5"></div></div>
<div class="t" style="left:296.00px;top:64.00px;font-size:11.0px;font-weight:400;color:#25282b;-webkit-text-stroke:0.22px #25282b">Failed</div>
<svg class="r" style="left:384px;top:65px" width="4" height="4"><circle cx="2.20" cy="2.20" r="0.60" fill="#4a4f54"/></svg>
<svg class="r" style="left:384px;top:67px" width="4" height="4"><circle cx="2.20" cy="2.50" r="0.60" fill="#4a4f54"/></svg>
<svg class="r" style="left:384px;top:70px" width="4" height="4"><circle cx="2.20" cy="1.80" r="0.60" fill="#4a4f54"/></svg>
<div class="t" style="left:296.40px;top:94.00px;font-size:17.6px;font-weight:400;color:#1c1e21;-webkit-text-stroke:0.6px #1c1e21;letter-spacing:0.5px">7</div>
<div class="t" style="left:296.00px;top:118.00px;font-size:7.0px;font-weight:400;color:#33393f;-webkit-text-stroke:0.1px #33393f"><span style="text-decoration:underline;text-underline-offset:0.4px;text-decoration-color:#9aa1a7">1 filter applied</span></div>
<svg class="r" style="left:341.80px;top:116.80px" width="9" height="9" viewBox="-5 -5 10 10"><circle cx="0" cy="0" r="4.4" fill="none" stroke="#3a4046" stroke-width="0.75"/><rect x="-0.4" y="-1.2" width="0.8" height="3.4" fill="#3a4046"/><rect x="-0.45" y="-3" width="0.9" height="0.9" fill="#3a4046"/></svg>
<div class="t" style="left:296.00px;top:141.00px;font-size:6.9px;font-weight:400;color:#25282b;-webkit-text-stroke:0.3px #25282b">View trades</div>
<svg class="r" style="left:383.00px;top:140.40px" width="6.2" height="6.2" viewBox="0 0 12 12"><path d="M1.5 10.5 L10.5 1.5 M3.5 1.5 H10.5 V8.5" fill="none" stroke="#2f3438" stroke-width="1.5"/></svg>
<div class="r" style="left:403px;top:55px;width:222px;height:97px;border:1px solid #ebcd7c;border-radius:4.5px;overflow:hidden;background:#fff"><div class="r" style="left:-1px;right:-1px;top:-1px;height:5.8px;background:#dca81c"></div><div class="r" style="left:0;right:0;bottom:0;height:15.5px;background:#eef2f5"></div></div>
<div class="t" style="left:414.00px;top:64.00px;font-size:11.0px;font-weight:400;color:#25282b;-webkit-text-stroke:0.22px #25282b">Unmatched</div>
<svg class="r" style="left:609px;top:64px" width="4" height="4"><circle cx="2.00" cy="1.60" r="0.60" fill="#4a4f54"/></svg>
<svg class="r" style="left:609px;top:66px" width="4" height="4"><circle cx="2.00" cy="1.90" r="0.60" fill="#4a4f54"/></svg>
<svg class="r" style="left:609px;top:68px" width="4" height="4"><circle cx="2.00" cy="2.20" r="0.60" fill="#4a4f54"/></svg>
<div class="t" style="left:414.00px;top:81.00px;font-size:6.65px;font-weight:400;color:#33404a;-webkit-text-stroke:0.2px #33404a">For more than&nbsp;<span style="margin-left:0.8px;-webkit-text-stroke:0.3px #262b30;color:#262b30">30 mins</span></div>
<div class="t" style="left:414.40px;top:94.00px;font-size:17.6px;font-weight:400;color:#1c1e21;-webkit-text-stroke:0.6px #1c1e21;letter-spacing:0.5px">7</div>
<div class="t" style="left:414.00px;top:118.00px;font-size:7.0px;font-weight:400;color:#33393f;-webkit-text-stroke:0.1px #33393f"><span style="text-decoration:underline;text-underline-offset:0.4px;text-decoration-color:#9aa1a7">2 filter applied</span></div>
<svg class="r" style="left:459.80px;top:116.80px" width="9" height="9" viewBox="-5 -5 10 10"><circle cx="0" cy="0" r="4.4" fill="none" stroke="#3a4046" stroke-width="0.75"/><rect x="-0.4" y="-1.2" width="0.8" height="3.4" fill="#3a4046"/><rect x="-0.45" y="-3" width="0.9" height="0.9" fill="#3a4046"/></svg>
<div class="t" style="left:423.60px;top:141.00px;font-size:6.9px;font-weight:400;color:#25282b;-webkit-text-stroke:0.3px #25282b">View trades</div>
<svg class="r" style="left:608.00px;top:140.40px" width="6.2" height="6.2" viewBox="0 0 12 12"><path d="M1.5 10.5 L10.5 1.5 M3.5 1.5 H10.5 V8.5" fill="none" stroke="#2f3438" stroke-width="1.5"/></svg>
<div class="r" style="left:631px;top:55px;width:112px;height:97px;border:1px solid #e2837e;border-radius:4.5px;overflow:hidden;background:#fff"><div class="r" style="left:-1px;right:-1px;top:-1px;height:5.8px;background:#c9261f"></div><div class="r" style="left:0;right:0;bottom:0;height:15.5px;background:#eef2f5"></div></div>
<div class="t" style="left:642.00px;top:64.00px;font-size:11.0px;font-weight:400;color:#25282b;-webkit-text-stroke:0.22px #25282b">Disputed</div>
<svg class="r" style="left:730px;top:65px" width="4" height="4"><circle cx="2.20" cy="2.20" r="0.60" fill="#4a4f54"/></svg>
<svg class="r" style="left:730px;top:67px" width="4" height="4"><circle cx="2.20" cy="2.50" r="0.60" fill="#4a4f54"/></svg>
<svg class="r" style="left:730px;top:70px" width="4" height="4"><circle cx="2.20" cy="1.80" r="0.60" fill="#4a4f54"/></svg>
<div class="t" style="left:642.40px;top:94.00px;font-size:17.6px;font-weight:400;color:#1c1e21;-webkit-text-stroke:0.6px #1c1e21;letter-spacing:0.5px">7</div>
<div class="t" style="left:642.00px;top:118.00px;font-size:7.0px;font-weight:400;color:#33393f;-webkit-text-stroke:0.1px #33393f"><span style="text-decoration:underline;text-underline-offset:0.4px;text-decoration-color:#9aa1a7">1 filter applied</span></div>
<svg class="r" style="left:690.50px;top:118.8px" width="5" height="5" viewBox="0 0 10 10"><path d="M3 1.5 L6.5 5 L3 8.5" fill="none" stroke="#333" stroke-width="1.8"/></svg>
<div class="t" style="left:642.00px;top:141.00px;font-size:6.9px;font-weight:400;color:#25282b;-webkit-text-stroke:0.3px #25282b">View trades</div>
<svg class="r" style="left:729.00px;top:140.40px" width="6.2" height="6.2" viewBox="0 0 12 12"><path d="M1.5 10.5 L10.5 1.5 M3.5 1.5 H10.5 V8.5" fill="none" stroke="#2f3438" stroke-width="1.5"/></svg>
<svg class="r" style="left:522px;top:75px" width="13" height="13"><circle cx="6.30" cy="6.80" r="5.10" fill="#16191c"/></svg>
<svg class="r" style="left:523px;top:76.60px" width="10.4" height="10.4" viewBox="0 0 10.4 10.4"><text x="5.2" y="7.2" text-anchor="middle" font-family="Liberation Sans" font-size="5.6" fill="#f2f2f2" letter-spacing="-0.2">10</text></svg>
<div class="t" style="left:540.80px;top:79.00px;font-size:7.95px;font-weight:400;color:#2e3a44;-webkit-text-stroke:0.12px #2e3a44"><span style="text-decoration:underline;text-underline-offset:0.3px;text-decoration-color:#a0a8ae">Allege execution</span></div>
<svg class="r" style="left:522px;top:91px" width="13" height="13"><circle cx="6.30" cy="6.80" r="5.10" fill="#16191c"/></svg>
<svg class="r" style="left:523px;top:92.60px" width="10.4" height="10.4" viewBox="0 0 10.4 10.4"><text x="5.2" y="7.2" text-anchor="middle" font-family="Liberation Sans" font-size="5.6" fill="#f2f2f2" letter-spacing="-0.2">10</text></svg>
<div class="t" style="left:540.80px;top:95.00px;font-size:7.95px;font-weight:400;color:#2e3a44;-webkit-text-stroke:0.12px #2e3a44"><span style="text-decoration:underline;text-underline-offset:0.3px;text-decoration-color:#a0a8ae">Block</span></div>
<svg class="r" style="left:522px;top:107px" width="13" height="13"><circle cx="6.30" cy="6.50" r="5.10" fill="#16191c"/></svg>
<svg class="r" style="left:523px;top:108.30px" width="10.4" height="10.4" viewBox="0 0 10.4 10.4"><text x="5.2" y="7.2" text-anchor="middle" font-family="Liberation Sans" font-size="5.6" fill="#f2f2f2" letter-spacing="-0.2">14</text></svg>
<div class="t" style="left:540.80px;top:110.00px;font-size:7.95px;font-weight:400;color:#2e3a44;-webkit-text-stroke:0.12px #2e3a44"><span style="text-decoration:underline;text-underline-offset:0.3px;text-decoration-color:#a0a8ae">Allocation</span></div>
<svg class="r" style="left:601.80px;top:78.70px" width="6.2" height="6.2" viewBox="0 0 12 12"><path d="M1.5 10.5 L10.5 1.5 M3.5 1.5 H10.5 V8.5" fill="none" stroke="#2f3438" stroke-width="1.3"/></svg>
<svg class="r" style="left:564.00px;top:94.70px" width="6.2" height="6.2" viewBox="0 0 12 12"><path d="M1.5 10.5 L10.5 1.5 M3.5 1.5 H10.5 V8.5" fill="none" stroke="#2f3438" stroke-width="1.3"/></svg>
<svg class="r" style="left:579.80px;top:110.40px" width="6.2" height="6.2" viewBox="0 0 12 12"><path d="M1.5 10.5 L10.5 1.5 M3.5 1.5 H10.5 V8.5" fill="none" stroke="#2f3438" stroke-width="1.3"/></svg></div></body></html>
